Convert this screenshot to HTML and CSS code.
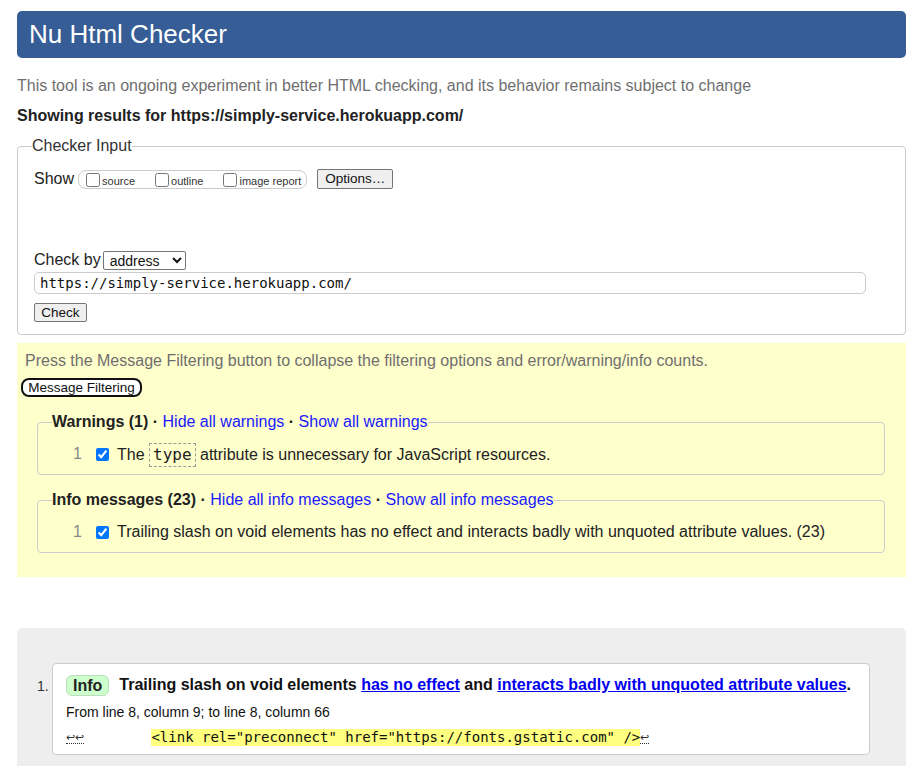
FILE: index.html
```html
<!DOCTYPE html>
<html lang="en">
<head>
<meta charset="utf-8">
<title>Nu Html Checker</title>
<link rel="stylesheet" href="styles.css">
</head>
<body>
<h1 class="brand">Nu Html Checker</h1>
<p class="intro">This tool is an ongoing experiment in better HTML checking, and its behavior remains subject to change</p>
<p class="showing">Showing results for https://simply-service.herokuapp.com/</p>

<fieldset class="input-box">
  <legend class="input-legend">Checker Input</legend>
  <div class="show-row">
    <span class="show-label">Show</span>
    <span class="show-group">
      <label class="opt"><input type="checkbox" class="cb">source</label>
      <label class="opt"><input type="checkbox" class="cb">outline</label>
      <label class="opt"><input type="checkbox" class="cb">image report</label>
    </span>
    <button class="btn btn-options">Options…</button>
  </div>
  <div class="checkby-row">
    <span class="checkby-label">Check by</span>
    <select class="sel"><option>address</option></select>
  </div>
  <input class="url" type="text" value="https://simply-service.herokuapp.com/">
  <button class="btn btn-check">Check</button>
</fieldset>

<div class="filters">
  <p class="filters-note">Press the Message Filtering button to collapse the filtering options and error/warning/info counts.</p>
  <button class="btn-filter">Message Filtering</button>
  <fieldset class="group">
    <legend class="group-legend">Warnings (1) · <a class="glink" href="#">Hide all warnings</a> · <a class="glink" href="#">Show all warnings</a></legend>
    <div class="grow">
      <span class="gnum">1</span>
      <input type="checkbox" class="gcb" checked>
      <span class="gtext">The <code class="tcode">type</code> attribute is unnecessary for JavaScript resources.</span>
    </div>
  </fieldset>
  <fieldset class="group group-info">
    <legend class="group-legend">Info messages (23) · <a class="glink" href="#">Hide all info messages</a> · <a class="glink" href="#">Show all info messages</a></legend>
    <div class="grow">
      <span class="gnum">1</span>
      <input type="checkbox" class="gcb" checked>
      <span class="gtext">Trailing slash on void elements has no effect and interacts badly with unquoted attribute values. (23)</span>
    </div>
  </fieldset>
</div>

<div class="results">
  <ol class="msgs">
    <li class="msg">
      <p class="msg-title"><span class="badge">Info</span><span class="msg-text">Trailing slash on void elements <a class="mlink" href="#">has no effect</a> and <a class="mlink" href="#">interacts badly with unquoted attribute values</a>.</span></p>
      <p class="loc">From line 8, column 9; to line 8, column 66</p>
      <p class="extract"><span class="lf">↩↩</span><span class="ws">        </span><mark class="hl">&lt;link rel="preconnect" href="https://fonts.gstatic.com" /&gt;</mark><span class="lf">↩</span></p>
    </li>
  </ol>
</div>
</body>
</html>
```

FILE: styles.css
```css
html, body {
  margin: 0;
  background: #fff;
}
body {
  padding: 11px 5px 0 17px;
  font-family: "Liberation Sans", Arial, sans-serif;
  font-size: 16px;
  color: #222;
}
.brand {
  margin: 0;
  height: 47px;
  line-height: 46px;
  padding: 0 12px;
  background: #365d95;
  color: #fff;
  font-size: 26px;
  font-weight: normal;
  border-radius: 5px;
}
.intro {
  margin: 19px 0 0;
  line-height: 18px;
  color: #6f6f6f;
}
.showing {
  margin: 12px 0 0;
  line-height: 18px;
  font-weight: bold;
}
.input-box {
  margin: 11px 0 0;
  padding: 13px 16px 12px;
  border: 1px solid #ccc;
  border-radius: 4px;
  min-width: 0;
}
.input-legend {
  padding: 0;
  margin-left: -2px;
  line-height: 20px;
  color: #333;
}
.show-row {
  display: flex;
  align-items: center;
  height: 20px;
}
.show-label {
  margin-right: 4px;
}
.show-group {
  display: inline-flex;
  align-items: flex-end;
  border: 1px solid #ccc;
  border-radius: 8px;
  padding: 0 5px 1px 7px;
  box-sizing: border-box;
  height: 19px;
}
.opt {
  display: inline-flex;
  align-items: flex-end;
  font-size: 11px;
  line-height: 12px;
  color: #333;
  margin-right: 20px;
}
.opt:last-child {
  margin-right: 0;
}
.cb {
  flex: none;
  margin: 0 2px 0 0;
  width: 14px;
  height: 14px;
}
.btn {
  font-family: "Liberation Sans", Arial, sans-serif;
  font-size: 13.5px;
  color: #111;
  background: #efefef;
  border: 1px solid #767676;
  border-radius: 2px;
  padding: 0 7px;
  height: 20px;
  line-height: 18px;
}
.btn-options {
  margin-left: 10px;
  width: 76px;
}
.checkby-row {
  display: flex;
  align-items: center;
  height: 18px;
  margin-top: 62px;
}
.checkby-label {
  margin-right: 2px;
}
.sel {
  width: 83px;
  height: 19px;
  font-family: "Liberation Sans", Arial, sans-serif;
  font-size: 14px;
  color: #111;
  border: 1px solid #767676;
  border-radius: 2px;
  background: #fff;
  padding: 0 0 0 2px;
}
.url {
  display: block;
  box-sizing: border-box;
  width: 832px;
  height: 22px;
  margin-top: 3px;
  padding: 0 5px;
  font-family: "DejaVu Sans Mono", monospace;
  font-size: 14px;
  color: #111;
  border: 1px solid #ccc;
  border-radius: 5px;
  background: #fff;
}
.btn-check {
  display: block;
  margin-top: 9px;
  width: 53px;
  height: 19px;
  padding: 0;
}
.filters {
  margin-top: 8px;
  background: #ffffcc;
  padding: 9px 21px 24px 4px;
}
.filters-note {
  margin: 0 0 0 4px;
  line-height: 18px;
  color: #6f6f6f;
}
.btn-filter {
  display: block;
  margin-top: 8px;
  height: 19px;
  width: 121px;
  padding: 0;
  font-family: "Liberation Sans", Arial, sans-serif;
  font-size: 13.5px;
  color: #111;
  background: #fff;
  border: 2px solid #111;
  border-radius: 8px;
  line-height: 15px;
}
.group {
  margin: 15px 0 0 16px;
  padding: 10px 14px 8px;
  border: 1px solid #ccc;
  border-radius: 4px;
  min-width: 0;
}
.group-info {
  margin-top: 15px;
}
.group-legend {
  padding: 0;
  line-height: 20px;
  font-weight: bold;
  color: #222;
}
.glink {
  font-weight: normal;
  color: #1a1aff;
  text-decoration: none;
}
.grow {
  display: flex;
  align-items: center;
  height: 24px;
  padding-left: 21px;
}
.gnum {
  color: #888;
  width: 9px;
}
.gcb {
  margin: 0 8px 0 14px;
  width: 13px;
  height: 13px;
}
.gtext {
  color: #222;
}
.tcode {
  font-family: "DejaVu Sans Mono", monospace;
  font-size: 16px;
  border: 1px dashed #999;
  padding: 1px 3px 2px;
}
.results {
  margin-top: 51px;
  background: #eee;
  border-radius: 5px 5px 0 0;
  padding: 35px 36px 30px 35px;
}
.msgs {
  margin: 0;
  padding: 0;
  list-style: none;
  counter-reset: m;
}
.msg {
  position: relative;
  background: #fff;
  border: 1px solid #ccc;
  border-radius: 4px;
  padding: 10px 13px 8px;
  counter-increment: m;
}
.msg::before {
  content: counter(m) ".";
  position: absolute;
  left: -16px;
  top: 14px;
  font-size: 14px;
  color: #333;
}
.msg-title {
  margin: 0;
  display: flex;
  align-items: center;
  height: 22px;
  font-weight: bold;
}
.badge {
  display: inline-block;
  background: #ccffcc;
  border: 1px solid #bbddbb;
  border-radius: 6px;
  padding: 0 6px;
  line-height: 19px;
  margin-right: 10px;
}
.msg-text {
  color: #111;
}
.mlink {
  color: #0000ee;
  text-decoration: underline;
}
.loc {
  margin: 8px 0 0;
  font-size: 14px;
  line-height: 16px;
  color: #111;
}
.extract {
  margin: 9px 0 0;
  height: 17px;
  display: flex;
  align-items: center;
  white-space: pre;
}
.lf {
  font-size: 11px;
  color: #333;
  border-bottom: 1px dotted #333;
  line-height: 11px;
}
.ws {
  font-family: "DejaVu Sans Mono", monospace;
  font-size: 14px;
}
.hl {
  background: #ffff80;
  color: #111;
  font-family: "DejaVu Sans Mono", monospace;
  font-size: 14px;
  line-height: 17px;
}
```
